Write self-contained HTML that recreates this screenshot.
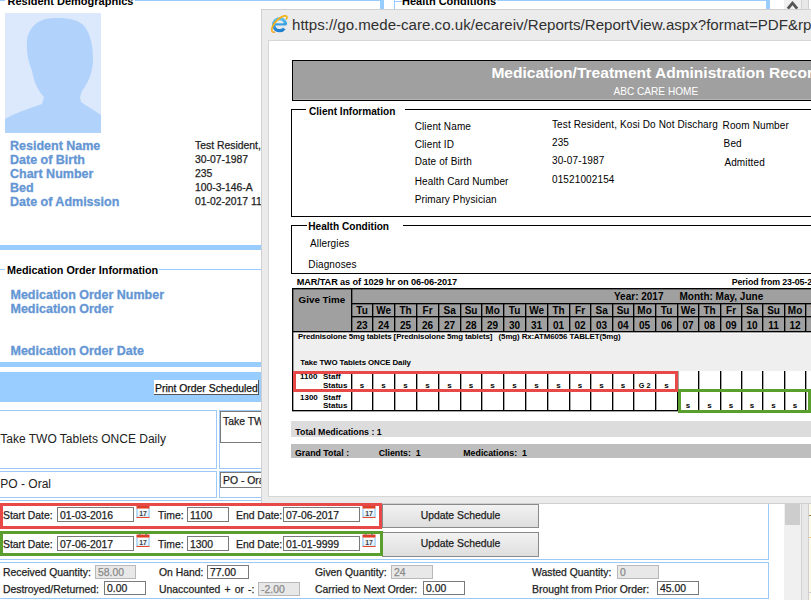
<!DOCTYPE html>
<html><head><meta charset="utf-8">
<style>
*{box-sizing:border-box}
html,body{margin:0;padding:0;width:811px;height:600px;overflow:hidden;background:#fff;position:relative;font-family:"Liberation Sans",sans-serif}
.a{position:absolute;white-space:nowrap}
.lbl{font-weight:bold;font-size:12.5px;line-height:12.5px;color:#6496d4;-webkit-text-stroke:0.3px #6496d4}
.val{font-size:10.4px;line-height:10.4px;color:#1e1e1e;-webkit-text-stroke:0.25px #1e1e1e}
.tx{font-size:10.4px;line-height:10.4px;color:#1e1e1e;-webkit-text-stroke:0.25px #1e1e1e}
.bb{background:#99ccff}
.lb{background:#99ccff}
.inp{position:absolute;border:1px solid #7a7a7a;background:#fff;font-size:10.4px;line-height:10.4px;color:#1e1e1e;-webkit-text-stroke:0.25px currentColor;padding-left:2px;overflow:hidden}
.dis{background:#e8e8e8;border-color:#b8b8b8;color:#8a8a8a}
.cal{position:absolute;width:14px;height:13px}
.rb{position:absolute;border:3px solid #e74848;z-index:5}
.gb{position:absolute;border:3px solid #5a9e2e;z-index:5}
.btn{position:absolute;border:1px solid #8a8a8a;background:linear-gradient(#f2f2f2,#dedede);font-size:10.4px;line-height:10.4px;color:#1e1e1e;-webkit-text-stroke:0.25px #1e1e1e;text-align:center}
.r{font-family:"Liberation Sans",sans-serif;color:#000}
</style></head><body>

<!-- ===== underlying page ===== -->
<div class="a" style="left:0;top:0;width:5px;height:1px;background:#99ccff"></div>
<div class="a" style="left:135px;top:0;width:245px;height:1px;background:#99ccff"></div>
<div class="a" style="left:7.5px;top:-4.2px;font-weight:bold;font-size:11px;line-height:11px;color:#000">Resident Demographics</div>

<svg class="a" style="left:5px;top:13px" width="96" height="120" viewBox="0 0 96 120">
<rect width="96" height="120" fill="#dce9fc"/>
<path fill="#b1d3fb" d="M0,106 C8,101 22,96 37,91 L39,84 C34,79 29,70 27,58 C24,50 21,40 22,28 C23,16 32,6 46,5.3 C60,4.5 74,6 80,14 C86,22 88,34 88,46 C88,60 83,70 77,78 L75,84 L76,89 C82,93 90,98 96,102 L96,120 L0,120 Z"/>
</svg>

<div class="a lbl" style="left:10px;top:139.6px">Resident Name</div>
<div class="a lbl" style="left:10px;top:154.4px">Date of Birth</div>
<div class="a lbl" style="left:10px;top:168.2px">Chart Number</div>
<div class="a lbl" style="left:10px;top:182.0px">Bed</div>
<div class="a lbl" style="left:10px;top:195.8px">Date of Admission</div>

<div class="a val" style="left:195px;top:141.1px">Test Resident,</div>
<div class="a val" style="left:195px;top:155.1px">30-07-1987</div>
<div class="a val" style="left:195px;top:169.2px">235</div>
<div class="a val" style="left:195px;top:183.2px">100-3-146-A</div>
<div class="a val" style="left:195px;top:197.2px">01-02-2017 11:00</div>

<div class="a bb" style="left:0;top:245px;width:265px;height:5px"></div>

<div class="a" style="left:0;top:269px;width:5px;height:1px;background:#99ccff"></div>
<div class="a" style="left:159px;top:269px;width:106px;height:1px;background:#99ccff"></div>
<div class="a" style="left:7px;top:264.5px;font-weight:bold;font-size:10.8px;line-height:10.8px;color:#000">Medication Order Information</div>

<div class="a lbl" style="left:10.5px;top:288.9px">Medication Order Number</div>
<div class="a lbl" style="left:10.5px;top:302.9px">Medication Order</div>
<div class="a lbl" style="left:10.5px;top:345.2px">Medication Order Date</div>

<div class="a bb" style="left:0;top:362px;width:265px;height:5px"></div>
<div class="a lb" style="left:0;top:372px;width:265px;height:30px"></div>
<div class="a" style="left:154px;top:380px;width:105px;height:15px;background:#fff;border-right:1px solid #555;border-bottom:1px solid #555;font-size:10.4px;line-height:10.4px;color:#111;-webkit-text-stroke:0.25px #111;padding:4px 0 0 1px">Print Order Scheduled</div>

<!-- cells -->
<div class="a" style="left:-2px;top:410px;width:219px;height:59px;border:1px solid #9ccaf5"></div>
<div class="a" style="left:219px;top:410px;width:60px;height:59px;border:1px solid #9ccaf5"></div>
<div class="a" style="left:0.3px;top:432.7px;font-size:12px;line-height:12px;color:#222">Take TWO Tablets ONCE Daily</div>
<div class="inp" style="left:220px;top:411px;width:60px;height:32px;padding-top:5px">Take TWO</div>

<div class="a" style="left:-2px;top:471px;width:219px;height:27px;border:1px solid #9ccaf5"></div>
<div class="a" style="left:219px;top:471px;width:60px;height:27px;border:1px solid #9ccaf5"></div>
<div class="a" style="left:0.3px;top:477.8px;font-size:12px;line-height:12px;color:#222">PO - Oral</div>
<div class="inp" style="left:220px;top:472px;width:60px;height:16px;padding-top:3px">PO - Oral</div>

<div class="a" style="left:0;top:500px;width:770px;height:1px;background:#9ccaf5"></div>

<!-- red row -->
<div class="rb" style="left:0;top:503px;width:382px;height:26px"></div>
<div class="a tx" style="left:3px;top:510.9px">Start Date:</div>
<div class="inp" style="left:57px;top:507px;width:77px;height:15px;padding-top:3px">01-03-2016</div>
<svg class="cal" style="left:136px;top:505px" width="14" height="14" viewBox="0 0 14 14"><defs><linearGradient id="cg" x1="0" y1="0" x2="0" y2="1"><stop offset="0" stop-color="#fff"/><stop offset="1" stop-color="#dbeefc"/></linearGradient></defs><rect x="0" y="3.6" width="14" height="9.6" fill="url(#cg)"/><rect x="0" y="3.6" width="1" height="9.6" fill="#7dbcf2"/><rect x="13" y="3.6" width="1" height="9.6" fill="#7dbcf2"/><rect x="0" y="0.6" width="14" height="3.2" fill="#e33d24"/><rect x="0" y="12.9" width="14" height="1.1" fill="#e4462e"/><ellipse cx="3.4" cy="1" rx="1.3" ry="0.6" fill="#7a6a6a"/><ellipse cx="10.4" cy="1" rx="1.3" ry="0.6" fill="#7a6a6a"/><text x="7" y="11.6" font-size="7.4" font-weight="bold" letter-spacing="-0.2" text-anchor="middle" fill="#404040" font-family="Liberation Sans">17</text></svg>
<div class="a tx" style="left:158px;top:510.9px">Time:</div>
<div class="inp" style="left:187px;top:507px;width:42px;height:15px;padding-top:3px">1100</div>
<div class="a tx" style="left:236px;top:510.9px">End Date:</div>
<div class="inp" style="left:283px;top:507px;width:77px;height:15px;padding-top:3px">07-06-2017</div>
<svg class="cal" style="left:362px;top:505px" width="14" height="14" viewBox="0 0 14 14"><defs><linearGradient id="cg" x1="0" y1="0" x2="0" y2="1"><stop offset="0" stop-color="#fff"/><stop offset="1" stop-color="#dbeefc"/></linearGradient></defs><rect x="0" y="3.6" width="14" height="9.6" fill="url(#cg)"/><rect x="0" y="3.6" width="1" height="9.6" fill="#7dbcf2"/><rect x="13" y="3.6" width="1" height="9.6" fill="#7dbcf2"/><rect x="0" y="0.6" width="14" height="3.2" fill="#e33d24"/><rect x="0" y="12.9" width="14" height="1.1" fill="#e4462e"/><ellipse cx="3.4" cy="1" rx="1.3" ry="0.6" fill="#7a6a6a"/><ellipse cx="10.4" cy="1" rx="1.3" ry="0.6" fill="#7a6a6a"/><text x="7" y="11.6" font-size="7.4" font-weight="bold" letter-spacing="-0.2" text-anchor="middle" fill="#404040" font-family="Liberation Sans">17</text></svg>
<div class="btn" style="left:382px;top:504px;width:157px;height:24px;padding-top:5.5px">Update Schedule</div>

<!-- green row -->
<div class="gb" style="left:0;top:531px;width:383px;height:25px"></div>
<div class="a tx" style="left:3px;top:539.6px">Start Date:</div>
<div class="inp" style="left:57px;top:536px;width:77px;height:15px;padding-top:3px">07-06-2017</div>
<svg class="cal" style="left:136px;top:534px" width="14" height="14" viewBox="0 0 14 14"><defs><linearGradient id="cg" x1="0" y1="0" x2="0" y2="1"><stop offset="0" stop-color="#fff"/><stop offset="1" stop-color="#dbeefc"/></linearGradient></defs><rect x="0" y="3.6" width="14" height="9.6" fill="url(#cg)"/><rect x="0" y="3.6" width="1" height="9.6" fill="#7dbcf2"/><rect x="13" y="3.6" width="1" height="9.6" fill="#7dbcf2"/><rect x="0" y="0.6" width="14" height="3.2" fill="#e33d24"/><rect x="0" y="12.9" width="14" height="1.1" fill="#e4462e"/><ellipse cx="3.4" cy="1" rx="1.3" ry="0.6" fill="#7a6a6a"/><ellipse cx="10.4" cy="1" rx="1.3" ry="0.6" fill="#7a6a6a"/><text x="7" y="11.6" font-size="7.4" font-weight="bold" letter-spacing="-0.2" text-anchor="middle" fill="#404040" font-family="Liberation Sans">17</text></svg>
<div class="a tx" style="left:158px;top:539.6px">Time:</div>
<div class="inp" style="left:187px;top:536px;width:42px;height:15px;padding-top:3px">1300</div>
<div class="a tx" style="left:236px;top:539.6px">End Date:</div>
<div class="inp" style="left:283px;top:536px;width:77px;height:15px;padding-top:3px">01-01-9999</div>
<svg class="cal" style="left:362px;top:534px" width="14" height="14" viewBox="0 0 14 14"><defs><linearGradient id="cg" x1="0" y1="0" x2="0" y2="1"><stop offset="0" stop-color="#fff"/><stop offset="1" stop-color="#dbeefc"/></linearGradient></defs><rect x="0" y="3.6" width="14" height="9.6" fill="url(#cg)"/><rect x="0" y="3.6" width="1" height="9.6" fill="#7dbcf2"/><rect x="13" y="3.6" width="1" height="9.6" fill="#7dbcf2"/><rect x="0" y="0.6" width="14" height="3.2" fill="#e33d24"/><rect x="0" y="12.9" width="14" height="1.1" fill="#e4462e"/><ellipse cx="3.4" cy="1" rx="1.3" ry="0.6" fill="#7a6a6a"/><ellipse cx="10.4" cy="1" rx="1.3" ry="0.6" fill="#7a6a6a"/><text x="7" y="11.6" font-size="7.4" font-weight="bold" letter-spacing="-0.2" text-anchor="middle" fill="#404040" font-family="Liberation Sans">17</text></svg>
<div class="btn" style="left:382px;top:532px;width:157px;height:25px;padding-top:5.5px">Update Schedule</div>

<!-- right-side page border -->
<div class="a" style="left:-2px;top:504px;width:771px;height:56px;border:1px solid #9ccaf5;border-left:none;border-top:none"></div>
<div class="a" style="left:-2px;top:562px;width:771px;height:37px;border:1px solid #9ccaf5;border-left:none"></div>

<!-- quantities -->
<div class="a tx" style="left:3px;top:568.0px">Received Quantity:</div>
<div class="inp dis" style="left:95px;top:565px;width:41px;height:14px;padding-top:2px">58.00</div>
<div class="a tx" style="left:3px;top:585.0px">Destroyed/Returned:</div>
<div class="inp" style="left:104px;top:581px;width:42px;height:14px;padding-top:2px">0.00</div>
<div class="a tx" style="left:159px;top:568.0px">On Hand:</div>
<div class="inp" style="left:207px;top:565px;width:42px;height:14px;padding-top:2px">77.00</div>
<div class="a tx" style="left:159px;top:585.0px;word-spacing:1.3px">Unaccounted + or -:</div>
<div class="inp dis" style="left:258px;top:582px;width:42px;height:14px;padding-top:2px">-2.00</div>
<div class="a tx" style="left:315px;top:568.0px">Given Quantity:</div>
<div class="inp dis" style="left:391px;top:565px;width:42px;height:14px;padding-top:2px">24</div>
<div class="a tx" style="left:315px;top:585.0px">Carried to Next Order:</div>
<div class="inp" style="left:423px;top:581px;width:42px;height:14px;padding-top:2px">0.00</div>
<div class="a tx" style="left:532px;top:568.0px">Wasted Quantity:</div>
<div class="inp dis" style="left:617px;top:565px;width:42px;height:14px;padding-top:2px">0</div>
<div class="a tx" style="left:532px;top:585.0px">Brought from Prior Order:</div>
<div class="inp" style="left:657px;top:581px;width:42px;height:14px;padding-top:2px">45.00</div>

<!-- scrollbar lower -->
<div class="a" style="left:784px;top:503px;width:17px;height:97px;background:#f0f0f0"></div>
<div class="a" style="left:785px;top:504px;width:15px;height:21px;background:#cdcdcd"></div>
<div class="a" style="left:801px;top:503px;width:8px;height:97px;background:#e8e8e8;border-left:1px solid #d2d2d2;border-right:1px solid #cfcfcf"></div>
<div class="a" style="left:809px;top:503px;width:2px;height:97px;background:#fcfbea"></div>
<div class="a" style="left:809px;top:515px;width:2px;height:1px;background:#a08050"></div>
<div class="a" style="left:809px;top:537px;width:2px;height:1px;background:#f0c080"></div>
<div class="a" style="left:809px;top:592px;width:2px;height:1px;background:#ccc"></div>

<!-- top strip right -->
<div class="a" style="left:394px;top:0;width:1px;height:9px;background:#99ccff"></div>
<div class="a" style="left:395px;top:1px;width:7px;height:1px;background:#99ccff"></div>
<div class="a" style="left:402px;top:-4.2px;font-weight:bold;font-size:11px;line-height:11px;color:#000">Health Conditions</div>
<div class="a" style="left:497px;top:0;width:270px;height:1px;background:#99ccff"></div>
<div class="a" style="left:380px;top:0;width:4px;height:9px;background:#99ccff"></div>
<div class="a" style="left:766px;top:0;width:4px;height:9px;background:#99ccff"></div>
<div class="a" style="left:784px;top:0;width:17px;height:9px;background:#f0f0f0"></div>
<svg class="a" style="left:786px;top:0px" width="13" height="9" viewBox="0 0 13 9"><path d="M1.8,8.6 L6.5,3.2 L11.2,8.6" fill="none" stroke="#555" stroke-width="2.8"/></svg>
<div class="a" style="left:801px;top:0;width:8px;height:9px;background:#e8e8e8;border-left:1px solid #d2d2d2;border-right:1px solid #cfcfcf"></div>

<!-- ===== popup window ===== -->
<div class="a" style="left:261px;top:9px;width:560px;height:495px;background:#ebebeb;border:1px solid #d0d0d0"></div>
<svg class="a" style="left:268px;top:12px" width="24" height="24" viewBox="0 0 24 24">
<defs><linearGradient id="ieg" x1="0" y1="0" x2="0" y2="1"><stop offset="0" stop-color="#5cc0f0"/><stop offset="1" stop-color="#1f7fd0"/></linearGradient></defs>
<path d="M16.3,16.4 A6,6 0 1 1 17.6,12.6" fill="none" stroke="url(#ieg)" stroke-width="3.2"/>
<path d="M6.2,12.4 H18.4" stroke="#3aa0e2" stroke-width="2.2"/>
<path d="M4.6,19.8 C2.2,17.6 5.5,11 10.5,7 C15,3.4 18.8,3 19,5.2 C19.1,6 18.7,6.8 18.1,7.6" fill="none" stroke="#f4b31a" stroke-width="1.7"/>
<path d="M4.6,19.8 C5.2,20.3 6,20.3 7,20" fill="none" stroke="#f0a020" stroke-width="1.4"/>
</svg>
<div class="a" style="left:292px;top:16.8px;font-size:15.1px;line-height:15.1px;color:#303030">https://go.mede-care.co.uk/ecareiv/Reports/ReportView.aspx?format=PDF&amp;rpt=MAR</div>
<div class="a" style="left:268px;top:40px;width:560px;height:457px;background:#fff;border-top:1px solid #d6d6d6;border-left:1px solid #d6d6d6;border-bottom:1px solid #d6d6d6"></div>

<!-- report header -->
<div class="a" style="left:292px;top:60px;width:726px;height:41px;background:#a0a0a0;border:1px solid #000;box-shadow:inset 0 -1px 0 #b4b4b4"></div>
<div class="a r" style="left:491.4px;top:64.8px;font-weight:bold;font-size:15.55px;line-height:15.55px;color:#fff">Medication/Treatment Administration Record</div>
<div class="a r" style="left:613.5px;top:86.6px;font-size:10.1px;line-height:10.1px;color:#fff">ABC CARE HOME</div>

<!-- client information -->
<div class="a" style="left:291px;top:109px;width:600px;height:108px;border:1px solid #000;border-top:none"></div>
<div class="a" style="left:291px;top:109px;width:15px;height:1px;background:#000"></div>
<div class="a" style="left:405px;top:109px;width:500px;height:1px;background:#000"></div>
<div class="a r" style="left:309px;top:107.2px;font-weight:bold;font-size:10.1px;line-height:10.1px">Client Information</div>

<div class="a r" style="left:414.7px;top:121.6px;font-size:10px;line-height:10px;letter-spacing:0.12px">Client Name</div>
<div class="a r" style="left:414.7px;top:139.6px;font-size:10px;line-height:10px;letter-spacing:0.12px">Client ID</div>
<div class="a r" style="left:414.7px;top:157.4px;font-size:10px;line-height:10px;letter-spacing:0.12px">Date of Birth</div>
<div class="a r" style="left:414.7px;top:176.6px;font-size:10px;line-height:10px;letter-spacing:0.12px">Health Card Number</div>
<div class="a r" style="left:414.7px;top:195.4px;font-size:10px;line-height:10px;letter-spacing:0.12px">Primary Physician</div>

<div class="a r" style="left:552px;top:119.7px;font-size:10px;line-height:10px;letter-spacing:0.12px">Test Resident, Kosi Do Not Discharg</div>
<div class="a r" style="left:552px;top:138.1px;font-size:10px;line-height:10px;letter-spacing:0.12px">235</div>
<div class="a r" style="left:552px;top:156.1px;font-size:10px;line-height:10px;letter-spacing:0.12px">30-07-1987</div>
<div class="a r" style="left:552px;top:175.1px;font-size:10px;line-height:10px;letter-spacing:0.12px">01521002154</div>

<div class="a r" style="left:722.6px;top:120.7px;font-size:10px;line-height:10px;letter-spacing:0.12px">Room Number</div>
<div class="a r" style="left:723.6px;top:139.4px;font-size:10px;line-height:10px;letter-spacing:0.12px">Bed</div>
<div class="a r" style="left:724.4px;top:158.1px;font-size:10px;line-height:10px;letter-spacing:0.12px">Admitted</div>

<!-- health condition -->
<div class="a" style="left:291px;top:225px;width:600px;height:49px;border:1px solid #000;border-top:none"></div>
<div class="a" style="left:291px;top:225px;width:16px;height:1px;background:#000"></div>
<div class="a" style="left:403px;top:225px;width:500px;height:1px;background:#000"></div>
<div class="a r" style="left:308.3px;top:221.5px;font-weight:bold;font-size:10.1px;line-height:10.1px">Health Condition</div>
<div class="a r" style="left:310px;top:238.6px;font-size:10px;line-height:10px;letter-spacing:0.12px">Allergies</div>
<div class="a r" style="left:308.3px;top:260.4px;font-size:10px;line-height:10px;letter-spacing:0.12px">Diagnoses</div>

<div class="a r" style="left:296.7px;top:277.9px;font-weight:bold;font-size:9.2px;line-height:9.2px;letter-spacing:-0.1px">MAR/TAR as of 1029 hr on 06-06-2017</div>
<div class="a r" style="left:731.7px;top:277.6px;font-weight:bold;font-size:8.8px;line-height:8.8px;letter-spacing:-0.1px">Period from 23-05-2017</div>

<!-- table -->
<div id="tbl">
<div class="a" style="left:292px;top:288px;width:540px;height:44px;background:#a0a0a0"></div>
<div class="a" style="left:292px;top:332px;width:540px;height:39px;background:#efefef"></div>
<div class="a" style="left:292px;top:332px;width:540px;height:2px;background:#f7f7f7"></div>
<div class="a" style="left:292px;top:371px;width:540px;height:40px;background:#fff"></div>
<div class="a" style="left:292px;top:288px;width:540px;height:1px;background:#000;box-shadow:0 1px 0 rgba(0,0,0,.35)"></div>
<div class="a" style="left:292px;top:288px;width:1px;height:123px;background:#000;box-shadow:1px 0 0 rgba(0,0,0,.35)"></div>
<div class="a" style="left:292px;top:410px;width:540px;height:1px;background:#000;box-shadow:0 1px 0 rgba(0,0,0,.35)"></div>
<div class="a" style="left:351px;top:303px;width:480px;height:1px;background:#000;box-shadow:0 1px 0 rgba(0,0,0,.35)"></div>
<div class="a" style="left:351px;top:316px;width:480px;height:1px;background:#000;box-shadow:0 1px 0 rgba(0,0,0,.35)"></div>
<div class="a" style="left:292px;top:331px;width:540px;height:1px;background:#000;box-shadow:0 1px 0 rgba(0,0,0,.35)"></div>
<div class="a" style="left:351px;top:390px;width:480px;height:1px;background:#000;box-shadow:0 1px 0 rgba(0,0,0,.35)"></div>
<div class="a" style="left:351px;top:288px;width:1px;height:44px;background:#000;box-shadow:1px 0 0 rgba(0,0,0,.35)"></div>
<div class="a" style="left:351px;top:371px;width:1px;height:40px;background:#000;box-shadow:1px 0 0 rgba(0,0,0,.35)"></div>
<div class="a" style="left:372px;top:303px;width:1px;height:29px;background:#000;box-shadow:1px 0 0 rgba(0,0,0,.35)"></div>
<div class="a" style="left:372px;top:371px;width:1px;height:40px;background:#000;box-shadow:1px 0 0 rgba(0,0,0,.35)"></div>
<div class="a" style="left:394px;top:303px;width:1px;height:29px;background:#000;box-shadow:1px 0 0 rgba(0,0,0,.35)"></div>
<div class="a" style="left:394px;top:371px;width:1px;height:40px;background:#000;box-shadow:1px 0 0 rgba(0,0,0,.35)"></div>
<div class="a" style="left:416px;top:303px;width:1px;height:29px;background:#000;box-shadow:1px 0 0 rgba(0,0,0,.35)"></div>
<div class="a" style="left:416px;top:371px;width:1px;height:40px;background:#000;box-shadow:1px 0 0 rgba(0,0,0,.35)"></div>
<div class="a" style="left:438px;top:303px;width:1px;height:29px;background:#000;box-shadow:1px 0 0 rgba(0,0,0,.35)"></div>
<div class="a" style="left:438px;top:371px;width:1px;height:40px;background:#000;box-shadow:1px 0 0 rgba(0,0,0,.35)"></div>
<div class="a" style="left:460px;top:303px;width:1px;height:29px;background:#000;box-shadow:1px 0 0 rgba(0,0,0,.35)"></div>
<div class="a" style="left:460px;top:371px;width:1px;height:40px;background:#000;box-shadow:1px 0 0 rgba(0,0,0,.35)"></div>
<div class="a" style="left:481px;top:303px;width:1px;height:29px;background:#000;box-shadow:1px 0 0 rgba(0,0,0,.35)"></div>
<div class="a" style="left:481px;top:371px;width:1px;height:40px;background:#000;box-shadow:1px 0 0 rgba(0,0,0,.35)"></div>
<div class="a" style="left:503px;top:303px;width:1px;height:29px;background:#000;box-shadow:1px 0 0 rgba(0,0,0,.35)"></div>
<div class="a" style="left:503px;top:371px;width:1px;height:40px;background:#000;box-shadow:1px 0 0 rgba(0,0,0,.35)"></div>
<div class="a" style="left:525px;top:303px;width:1px;height:29px;background:#000;box-shadow:1px 0 0 rgba(0,0,0,.35)"></div>
<div class="a" style="left:525px;top:371px;width:1px;height:40px;background:#000;box-shadow:1px 0 0 rgba(0,0,0,.35)"></div>
<div class="a" style="left:547px;top:303px;width:1px;height:29px;background:#000;box-shadow:1px 0 0 rgba(0,0,0,.35)"></div>
<div class="a" style="left:547px;top:371px;width:1px;height:40px;background:#000;box-shadow:1px 0 0 rgba(0,0,0,.35)"></div>
<div class="a" style="left:569px;top:303px;width:1px;height:29px;background:#000;box-shadow:1px 0 0 rgba(0,0,0,.35)"></div>
<div class="a" style="left:569px;top:371px;width:1px;height:40px;background:#000;box-shadow:1px 0 0 rgba(0,0,0,.35)"></div>
<div class="a" style="left:590px;top:303px;width:1px;height:29px;background:#000;box-shadow:1px 0 0 rgba(0,0,0,.35)"></div>
<div class="a" style="left:590px;top:371px;width:1px;height:40px;background:#000;box-shadow:1px 0 0 rgba(0,0,0,.35)"></div>
<div class="a" style="left:612px;top:303px;width:1px;height:29px;background:#000;box-shadow:1px 0 0 rgba(0,0,0,.35)"></div>
<div class="a" style="left:612px;top:371px;width:1px;height:40px;background:#000;box-shadow:1px 0 0 rgba(0,0,0,.35)"></div>
<div class="a" style="left:633px;top:303px;width:1px;height:29px;background:#000;box-shadow:1px 0 0 rgba(0,0,0,.35)"></div>
<div class="a" style="left:633px;top:371px;width:1px;height:40px;background:#000;box-shadow:1px 0 0 rgba(0,0,0,.35)"></div>
<div class="a" style="left:655px;top:303px;width:1px;height:29px;background:#000;box-shadow:1px 0 0 rgba(0,0,0,.35)"></div>
<div class="a" style="left:655px;top:371px;width:1px;height:40px;background:#000;box-shadow:1px 0 0 rgba(0,0,0,.35)"></div>
<div class="a" style="left:677px;top:303px;width:1px;height:29px;background:#000;box-shadow:1px 0 0 rgba(0,0,0,.35)"></div>
<div class="a" style="left:677px;top:371px;width:1px;height:40px;background:#000;box-shadow:1px 0 0 rgba(0,0,0,.35)"></div>
<div class="a" style="left:698px;top:303px;width:1px;height:29px;background:#000;box-shadow:1px 0 0 rgba(0,0,0,.35)"></div>
<div class="a" style="left:698px;top:371px;width:1px;height:40px;background:#000;box-shadow:1px 0 0 rgba(0,0,0,.35)"></div>
<div class="a" style="left:720px;top:303px;width:1px;height:29px;background:#000;box-shadow:1px 0 0 rgba(0,0,0,.35)"></div>
<div class="a" style="left:720px;top:371px;width:1px;height:40px;background:#000;box-shadow:1px 0 0 rgba(0,0,0,.35)"></div>
<div class="a" style="left:741px;top:303px;width:1px;height:29px;background:#000;box-shadow:1px 0 0 rgba(0,0,0,.35)"></div>
<div class="a" style="left:741px;top:371px;width:1px;height:40px;background:#000;box-shadow:1px 0 0 rgba(0,0,0,.35)"></div>
<div class="a" style="left:762px;top:303px;width:1px;height:29px;background:#000;box-shadow:1px 0 0 rgba(0,0,0,.35)"></div>
<div class="a" style="left:762px;top:371px;width:1px;height:40px;background:#000;box-shadow:1px 0 0 rgba(0,0,0,.35)"></div>
<div class="a" style="left:784px;top:303px;width:1px;height:29px;background:#000;box-shadow:1px 0 0 rgba(0,0,0,.35)"></div>
<div class="a" style="left:784px;top:371px;width:1px;height:40px;background:#000;box-shadow:1px 0 0 rgba(0,0,0,.35)"></div>
<div class="a" style="left:805px;top:303px;width:1px;height:29px;background:#000;box-shadow:1px 0 0 rgba(0,0,0,.35)"></div>
<div class="a" style="left:805px;top:371px;width:1px;height:40px;background:#000;box-shadow:1px 0 0 rgba(0,0,0,.35)"></div>
<div class="a" style="left:298.6px;top:295.47px;font-weight:bold;font-size:9.8px;line-height:9.8px;color:#000">Give Time</div>
<div class="a" style="left:614px;top:291.80px;font-weight:bold;font-size:10px;line-height:10px;color:#000">Year: 2017</div>
<div class="a" style="left:679.5px;top:291.80px;font-weight:bold;font-size:10px;line-height:10px;color:#000">Month: May, June</div>
<div class="a" style="left:351.60px;width:21.00px;text-align:center;top:305.50px;font-weight:bold;font-size:10px;line-height:10px;color:#000">Tu</div>
<div class="a" style="left:351.60px;width:21.00px;text-align:center;top:320.50px;font-weight:bold;font-size:10px;line-height:10px;color:#000">23</div>
<div class="a" style="left:372.60px;width:22.00px;text-align:center;top:305.50px;font-weight:bold;font-size:10px;line-height:10px;color:#000">We</div>
<div class="a" style="left:372.60px;width:22.00px;text-align:center;top:320.50px;font-weight:bold;font-size:10px;line-height:10px;color:#000">24</div>
<div class="a" style="left:394.60px;width:22.00px;text-align:center;top:305.50px;font-weight:bold;font-size:10px;line-height:10px;color:#000">Th</div>
<div class="a" style="left:394.60px;width:22.00px;text-align:center;top:320.50px;font-weight:bold;font-size:10px;line-height:10px;color:#000">25</div>
<div class="a" style="left:416.60px;width:22.00px;text-align:center;top:305.50px;font-weight:bold;font-size:10px;line-height:10px;color:#000">Fr</div>
<div class="a" style="left:416.60px;width:22.00px;text-align:center;top:320.50px;font-weight:bold;font-size:10px;line-height:10px;color:#000">26</div>
<div class="a" style="left:438.60px;width:22.00px;text-align:center;top:305.50px;font-weight:bold;font-size:10px;line-height:10px;color:#000">Sa</div>
<div class="a" style="left:438.60px;width:22.00px;text-align:center;top:320.50px;font-weight:bold;font-size:10px;line-height:10px;color:#000">27</div>
<div class="a" style="left:460.60px;width:21.00px;text-align:center;top:305.50px;font-weight:bold;font-size:10px;line-height:10px;color:#000">Su</div>
<div class="a" style="left:460.60px;width:21.00px;text-align:center;top:320.50px;font-weight:bold;font-size:10px;line-height:10px;color:#000">28</div>
<div class="a" style="left:481.60px;width:22.00px;text-align:center;top:305.50px;font-weight:bold;font-size:10px;line-height:10px;color:#000">Mo</div>
<div class="a" style="left:481.60px;width:22.00px;text-align:center;top:320.50px;font-weight:bold;font-size:10px;line-height:10px;color:#000">29</div>
<div class="a" style="left:503.60px;width:22.00px;text-align:center;top:305.50px;font-weight:bold;font-size:10px;line-height:10px;color:#000">Tu</div>
<div class="a" style="left:503.60px;width:22.00px;text-align:center;top:320.50px;font-weight:bold;font-size:10px;line-height:10px;color:#000">30</div>
<div class="a" style="left:525.60px;width:22.00px;text-align:center;top:305.50px;font-weight:bold;font-size:10px;line-height:10px;color:#000">We</div>
<div class="a" style="left:525.60px;width:22.00px;text-align:center;top:320.50px;font-weight:bold;font-size:10px;line-height:10px;color:#000">31</div>
<div class="a" style="left:547.60px;width:22.00px;text-align:center;top:305.50px;font-weight:bold;font-size:10px;line-height:10px;color:#000">Th</div>
<div class="a" style="left:547.60px;width:22.00px;text-align:center;top:320.50px;font-weight:bold;font-size:10px;line-height:10px;color:#000">01</div>
<div class="a" style="left:569.60px;width:21.00px;text-align:center;top:305.50px;font-weight:bold;font-size:10px;line-height:10px;color:#000">Fr</div>
<div class="a" style="left:569.60px;width:21.00px;text-align:center;top:320.50px;font-weight:bold;font-size:10px;line-height:10px;color:#000">02</div>
<div class="a" style="left:590.60px;width:22.00px;text-align:center;top:305.50px;font-weight:bold;font-size:10px;line-height:10px;color:#000">Sa</div>
<div class="a" style="left:590.60px;width:22.00px;text-align:center;top:320.50px;font-weight:bold;font-size:10px;line-height:10px;color:#000">03</div>
<div class="a" style="left:612.60px;width:21.00px;text-align:center;top:305.50px;font-weight:bold;font-size:10px;line-height:10px;color:#000">Su</div>
<div class="a" style="left:612.60px;width:21.00px;text-align:center;top:320.50px;font-weight:bold;font-size:10px;line-height:10px;color:#000">04</div>
<div class="a" style="left:633.60px;width:22.00px;text-align:center;top:305.50px;font-weight:bold;font-size:10px;line-height:10px;color:#000">Mo</div>
<div class="a" style="left:633.60px;width:22.00px;text-align:center;top:320.50px;font-weight:bold;font-size:10px;line-height:10px;color:#000">05</div>
<div class="a" style="left:655.60px;width:22.00px;text-align:center;top:305.50px;font-weight:bold;font-size:10px;line-height:10px;color:#000">Tu</div>
<div class="a" style="left:655.60px;width:22.00px;text-align:center;top:320.50px;font-weight:bold;font-size:10px;line-height:10px;color:#000">06</div>
<div class="a" style="left:677.60px;width:21.00px;text-align:center;top:305.50px;font-weight:bold;font-size:10px;line-height:10px;color:#000">We</div>
<div class="a" style="left:677.60px;width:21.00px;text-align:center;top:320.50px;font-weight:bold;font-size:10px;line-height:10px;color:#000">07</div>
<div class="a" style="left:698.60px;width:22.00px;text-align:center;top:305.50px;font-weight:bold;font-size:10px;line-height:10px;color:#000">Th</div>
<div class="a" style="left:698.60px;width:22.00px;text-align:center;top:320.50px;font-weight:bold;font-size:10px;line-height:10px;color:#000">08</div>
<div class="a" style="left:720.60px;width:21.00px;text-align:center;top:305.50px;font-weight:bold;font-size:10px;line-height:10px;color:#000">Fr</div>
<div class="a" style="left:720.60px;width:21.00px;text-align:center;top:320.50px;font-weight:bold;font-size:10px;line-height:10px;color:#000">09</div>
<div class="a" style="left:741.60px;width:21.00px;text-align:center;top:305.50px;font-weight:bold;font-size:10px;line-height:10px;color:#000">Sa</div>
<div class="a" style="left:741.60px;width:21.00px;text-align:center;top:320.50px;font-weight:bold;font-size:10px;line-height:10px;color:#000">10</div>
<div class="a" style="left:762.60px;width:22.00px;text-align:center;top:305.50px;font-weight:bold;font-size:10px;line-height:10px;color:#000">Su</div>
<div class="a" style="left:762.60px;width:22.00px;text-align:center;top:320.50px;font-weight:bold;font-size:10px;line-height:10px;color:#000">11</div>
<div class="a" style="left:784.60px;width:21.00px;text-align:center;top:305.50px;font-weight:bold;font-size:10px;line-height:10px;color:#000">Mo</div>
<div class="a" style="left:784.60px;width:21.00px;text-align:center;top:320.50px;font-weight:bold;font-size:10px;line-height:10px;color:#000">12</div>
<div class="a" style="left:805.60px;width:22.00px;text-align:center;top:305.50px;font-weight:bold;font-size:10px;line-height:10px;color:#000">Tu</div>
<div class="a" style="left:805.60px;width:22.00px;text-align:center;top:320.50px;font-weight:bold;font-size:10px;line-height:10px;color:#000">13</div>
<div class="a" style="left:297.9px;top:333.19px;font-weight:bold;font-size:7.9px;line-height:7.9px;color:#000;letter-spacing:-0.1px">Prednisolone 5mg tablets [Prednisolone 5mg tablets]&nbsp;&nbsp; (5mg) Rx:ATM6056 TABLET(5mg)</div>
<div class="a" style="left:300.3px;top:359.19px;font-weight:bold;font-size:7.9px;line-height:7.9px;color:#000;letter-spacing:-0.1px">Take TWO Tablets ONCE Daily</div>
<div class="a" style="left:300px;top:372.60px;font-weight:bold;font-size:8px;line-height:8px;color:#000">1100</div>
<div class="a" style="left:323px;top:372.60px;font-weight:bold;font-size:8px;line-height:8px;color:#000">Staff</div>
<div class="a" style="left:323px;top:382.10px;font-weight:bold;font-size:8px;line-height:8px;color:#000">Status</div>
<div class="a" style="left:300px;top:393.50px;font-weight:bold;font-size:8px;line-height:8px;color:#000">1300</div>
<div class="a" style="left:323px;top:393.50px;font-weight:bold;font-size:8px;line-height:8px;color:#000">Staff</div>
<div class="a" style="left:323px;top:401.80px;font-weight:bold;font-size:8px;line-height:8px;color:#000">Status</div>
<div class="a" style="left:351.60px;width:21.00px;text-align:center;top:381.60px;font-weight:bold;font-size:8px;line-height:8px;color:#000">s</div>
<div class="a" style="left:372.60px;width:22.00px;text-align:center;top:381.60px;font-weight:bold;font-size:8px;line-height:8px;color:#000">s</div>
<div class="a" style="left:394.60px;width:22.00px;text-align:center;top:381.60px;font-weight:bold;font-size:8px;line-height:8px;color:#000">s</div>
<div class="a" style="left:416.60px;width:22.00px;text-align:center;top:381.60px;font-weight:bold;font-size:8px;line-height:8px;color:#000">s</div>
<div class="a" style="left:438.60px;width:22.00px;text-align:center;top:381.60px;font-weight:bold;font-size:8px;line-height:8px;color:#000">s</div>
<div class="a" style="left:460.60px;width:21.00px;text-align:center;top:381.60px;font-weight:bold;font-size:8px;line-height:8px;color:#000">s</div>
<div class="a" style="left:481.60px;width:22.00px;text-align:center;top:381.60px;font-weight:bold;font-size:8px;line-height:8px;color:#000">s</div>
<div class="a" style="left:503.60px;width:22.00px;text-align:center;top:381.60px;font-weight:bold;font-size:8px;line-height:8px;color:#000">s</div>
<div class="a" style="left:525.60px;width:22.00px;text-align:center;top:381.60px;font-weight:bold;font-size:8px;line-height:8px;color:#000">s</div>
<div class="a" style="left:547.60px;width:22.00px;text-align:center;top:381.60px;font-weight:bold;font-size:8px;line-height:8px;color:#000">s</div>
<div class="a" style="left:569.60px;width:21.00px;text-align:center;top:381.60px;font-weight:bold;font-size:8px;line-height:8px;color:#000">s</div>
<div class="a" style="left:590.60px;width:22.00px;text-align:center;top:381.60px;font-weight:bold;font-size:8px;line-height:8px;color:#000">s</div>
<div class="a" style="left:612.60px;width:21.00px;text-align:center;top:381.60px;font-weight:bold;font-size:8px;line-height:8px;color:#000">s</div>
<div class="a" style="left:633.60px;width:22.00px;text-align:center;top:382.18px;font-weight:bold;font-size:7.2px;line-height:7.2px;color:#000">G 2</div>
<div class="a" style="left:655.60px;width:22.00px;text-align:center;top:381.60px;font-weight:bold;font-size:8px;line-height:8px;color:#000">s</div>
<div class="a" style="left:677.60px;width:21.00px;text-align:center;top:401.80px;font-weight:bold;font-size:8px;line-height:8px;color:#000">s</div>
<div class="a" style="left:698.60px;width:22.00px;text-align:center;top:401.80px;font-weight:bold;font-size:8px;line-height:8px;color:#000">s</div>
<div class="a" style="left:720.60px;width:21.00px;text-align:center;top:401.80px;font-weight:bold;font-size:8px;line-height:8px;color:#000">s</div>
<div class="a" style="left:741.60px;width:21.00px;text-align:center;top:401.80px;font-weight:bold;font-size:8px;line-height:8px;color:#000">s</div>
<div class="a" style="left:762.60px;width:22.00px;text-align:center;top:401.80px;font-weight:bold;font-size:8px;line-height:8px;color:#000">s</div>
<div class="a" style="left:784.60px;width:21.00px;text-align:center;top:401.80px;font-weight:bold;font-size:8px;line-height:8px;color:#000">s</div>
<div class="a" style="left:293px;top:371px;width:385px;height:21px;border:3px solid #e74848;box-sizing:border-box"></div>
<div class="a" style="left:678px;top:389px;width:133px;height:24px;border:3px solid #5a9e2e;box-sizing:border-box"></div>
</div><!--/tbl-->

<!-- totals -->
<div class="a" style="left:291px;top:421px;width:540px;height:16px;background:#dcdcdc"></div>
<div class="a r" style="left:295.3px;top:428px;font-weight:bold;font-size:8.8px;line-height:8.8px">Total Medications : 1</div>
<div class="a" style="left:291px;top:444px;width:540px;height:14px;background:#bebebe"></div>
<div class="a r" style="left:295px;top:449px;font-weight:bold;font-size:8.8px;line-height:8.8px">Grand Total :</div>
<div class="a r" style="left:378.7px;top:449px;font-weight:bold;font-size:8.8px;line-height:8.8px">Clients:&nbsp; 1</div>
<div class="a r" style="left:463.3px;top:449px;font-weight:bold;font-size:8.8px;line-height:8.8px">Medications:&nbsp; 1</div>

</body></html>
